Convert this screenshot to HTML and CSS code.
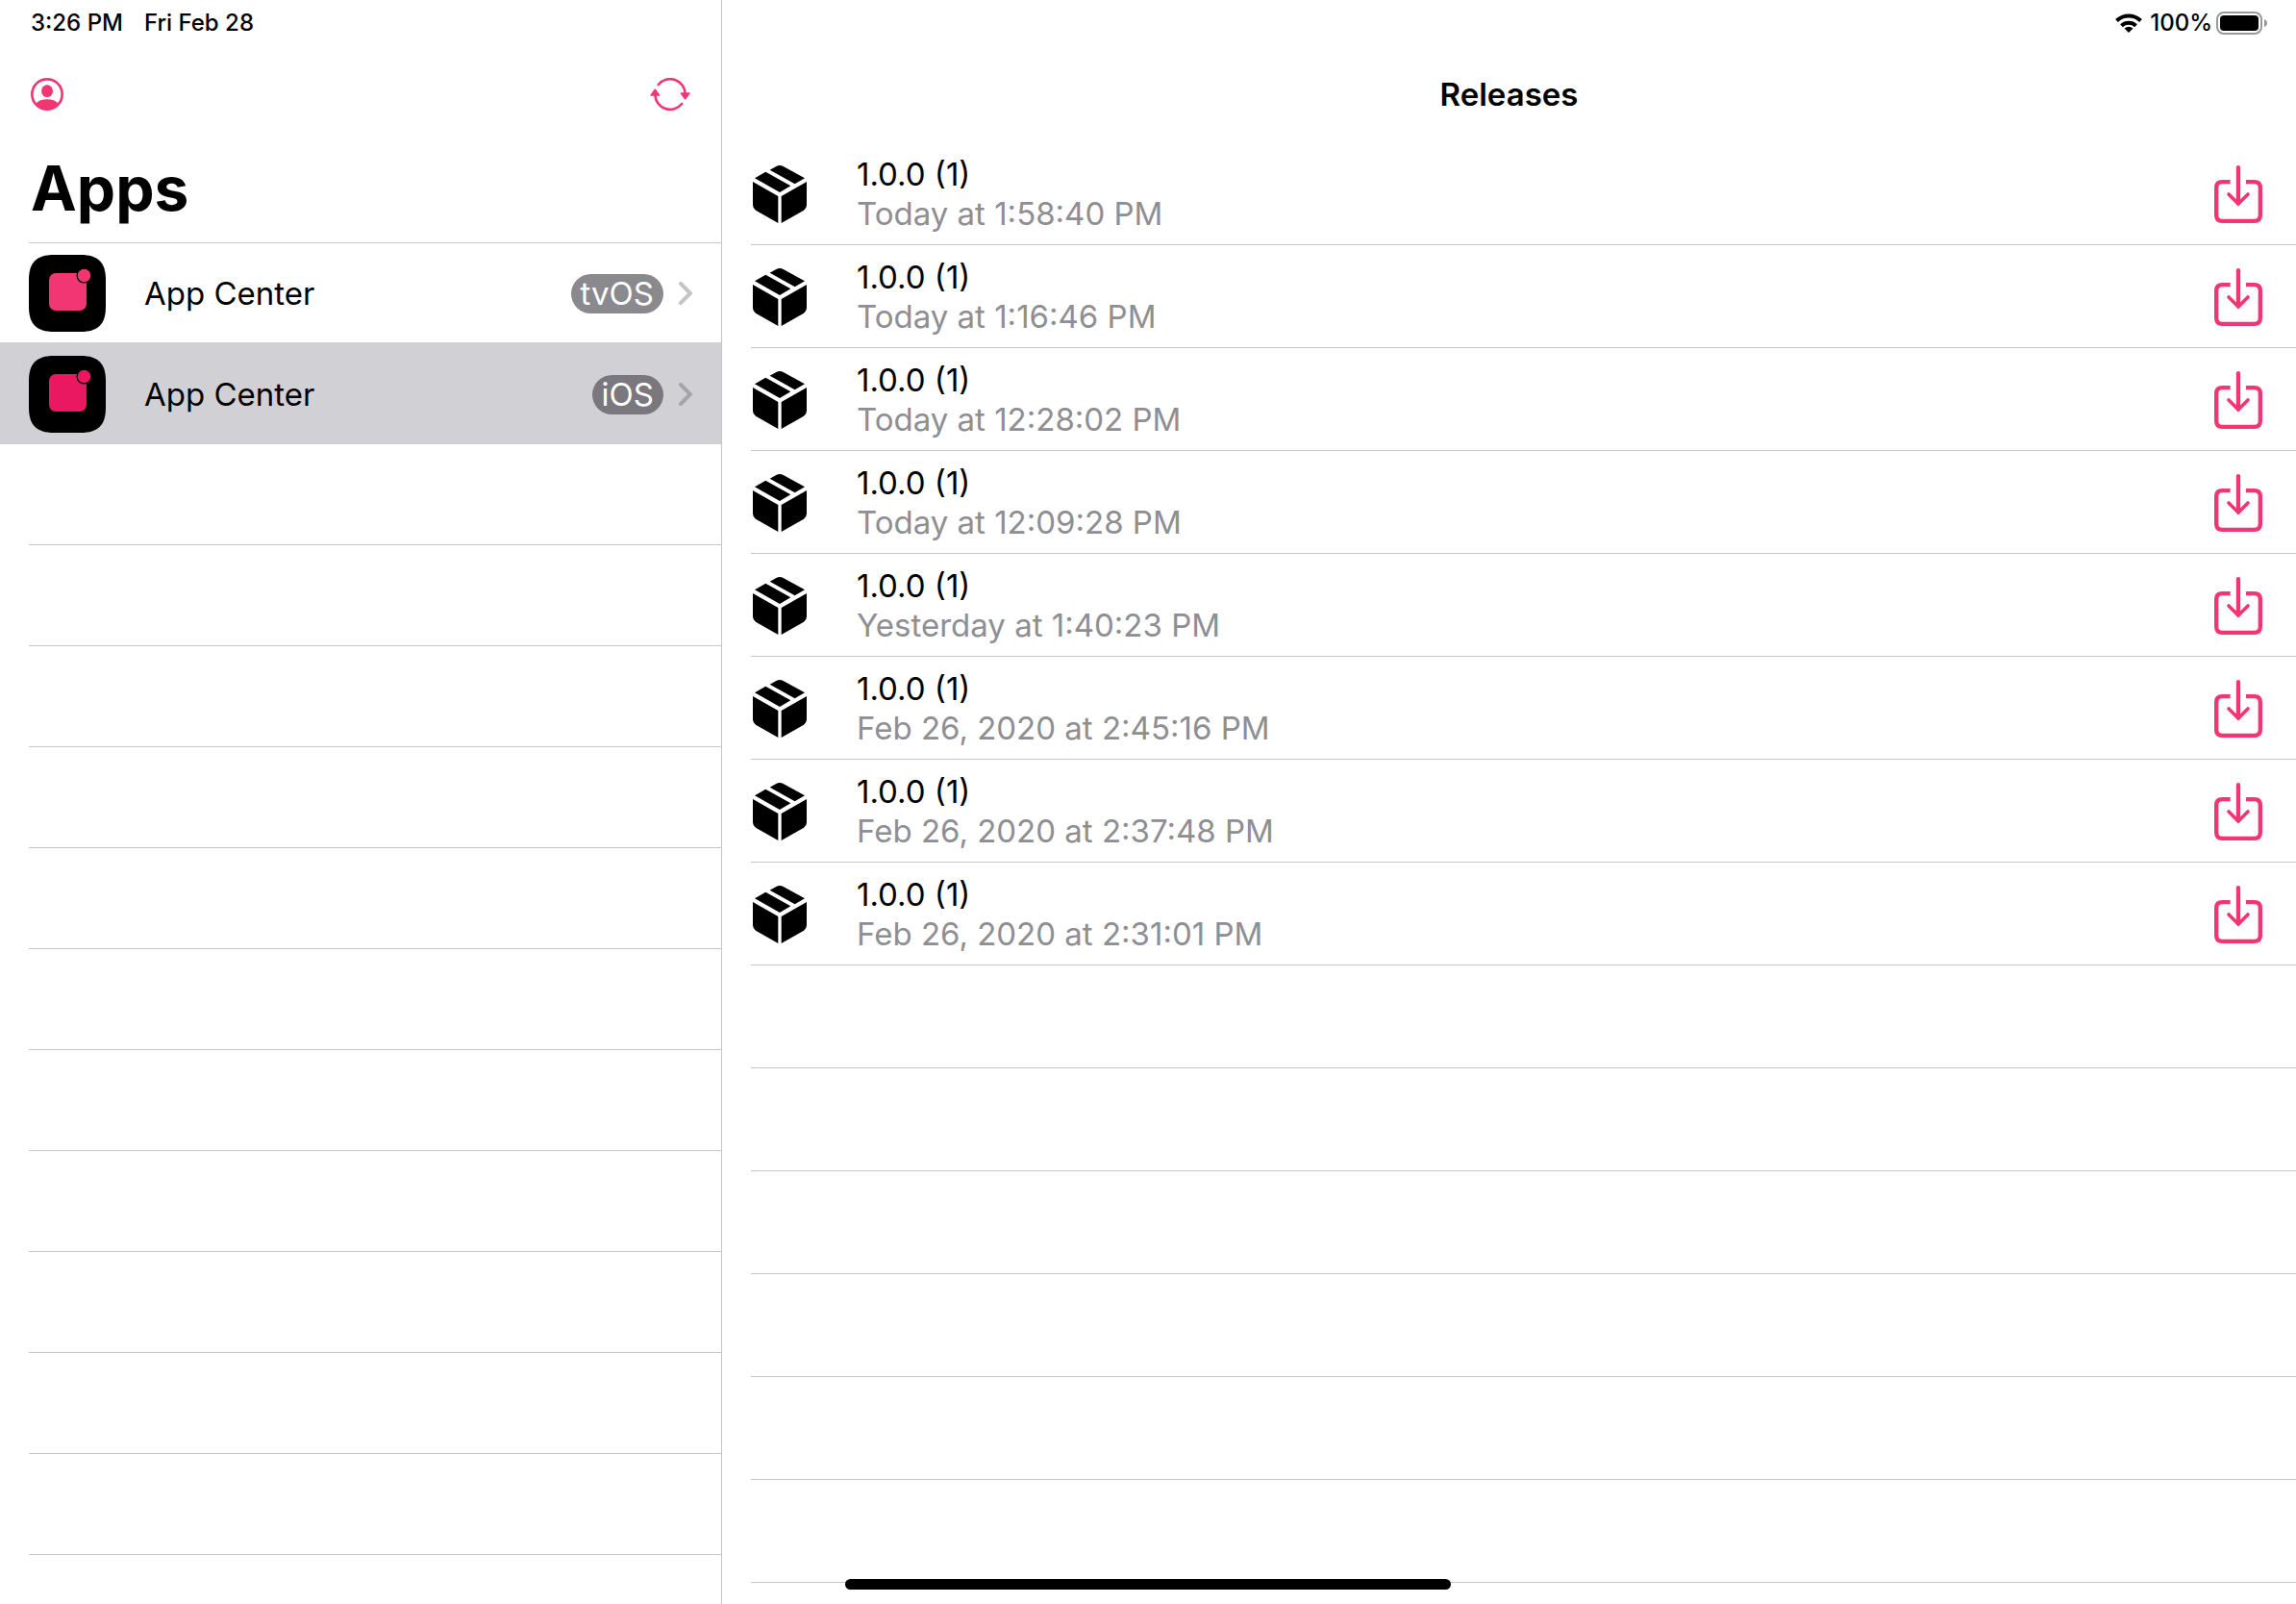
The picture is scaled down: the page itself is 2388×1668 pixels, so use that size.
FILE: index.html
```html
<!DOCTYPE html>
<html lang="en">
<head>
<meta charset="utf-8">
<title>Apps</title>
<link rel="stylesheet" href="styles.css">
</head>
<body>
<svg class="sprite" aria-hidden="true">
  <symbol id="app" viewBox="0 0 80 80">
    <path d="M0 26C0 8 8 0 26 0H54C72 0 80 8 80 26V54C80 72 72 80 54 80H26C8 80 0 72 0 54Z"/>
    <rect class="app-mark" x="21" y="19" width="39" height="39" rx="7"/>
    <circle cx="57.500" cy="21.500" r="8"/>
    <circle class="app-mark" cx="57.500" cy="21.500" r="6.800"/>
  </symbol>
  <symbol id="chevron" viewBox="0 0 14 24">
    <path d="M2 2L12 12L2 22" fill="none" stroke="currentColor" stroke-width="4" stroke-linecap="round" stroke-linejoin="miter"/>
  </symbol>
  <symbol id="box" viewBox="69 96 168 180">
    <path d="M69 147L148 192V276L78 236Q69 230 69 220ZM237 147L158 192V276L228 236Q237 230 237 220ZM75 136L109 116L187 160L153 180ZM122 110L142 99Q153 93 164 99L231 136L200 154Z"/>
  </symbol>
  <symbol id="download" viewBox="105 66 150 180">
    <g fill="none" stroke="currentColor" stroke-width="13">
      <path d="M155 117.500H130Q111.500 117.500 111.500 136V221Q111.500 239.500 130 239.500H230Q248.500 239.500 248.500 221V136Q248.500 117.500 230 117.500H204"/>
      <path d="M180 72.500V184" stroke-linecap="round"/>
      <path d="M150 156L180 186L210 156" stroke-width="11" stroke-linecap="round"/>
    </g>
  </symbol>
</svg>
<div class="split">
  <aside class="sidebar">
    <div class="status">
      <span>3:26 PM</span>
      <span>Fri Feb 28</span>
    </div>
    <div class="nav sidebar-nav">
      <button class="icon-button" type="button" aria-label="Account">
        <svg width="34" height="34" viewBox="96 243 102 102">
          <circle cx="147" cy="294" r="47" fill="none" stroke="currentColor" stroke-width="8"/>
          <ellipse cx="147" cy="284" rx="18" ry="19" fill="currentColor"/>
          <path d="M112 323Q124 310 147 310Q170 310 182 323Q168 342 147 342Q126 342 112 323Z" fill="currentColor"/>
        </svg>
      </button>
      <button class="icon-button" type="button" aria-label="Refresh">
        <svg width="42" height="34" viewBox="348 93 126 102">
          <g fill="none" stroke="currentColor" stroke-width="8" stroke-linecap="round">
            <path d="M374.500 114A47 47 0 0 1 458 142"/>
            <path d="M447.500 174A47 47 0 0 1 364 146"/>
          </g>
          <path d="M444 139H472Q474 140 473 142L460 160Q458 162 456 160L443 142Q442 140 444 139ZM378 149H350Q348 148 349 146L362 128Q364 125 366 128L379 146Q380 148 378 149Z" fill="currentColor"/>
        </svg>
      </button>
    </div>
    <h1 class="title">Apps</h1>
    <ul class="list apps">
      <li>
        <a class="app-row" href="#tvos">
          <svg class="app-icon" width="80" height="80"><use href="#app"/></svg>
          <span class="app-name">App Center</span>
          <span class="badge">tvOS</span>
          <svg class="chevron" width="14" height="24"><use href="#chevron"/></svg>
        </a>
      </li>
      <li>
        <a class="app-row selected" href="#ios" aria-current="page">
          <svg class="app-icon" width="80" height="80"><use href="#app"/></svg>
          <span class="app-name">App Center</span>
          <span class="badge">iOS</span>
          <svg class="chevron" width="14" height="24"><use href="#chevron"/></svg>
        </a>
      </li>
    </ul>
    <div class="blank-rows app-blanks"></div>
  </aside>
  <main class="detail">
    <div class="status status-right">
      <svg width="28" height="20" viewBox="0 0 28 20" aria-hidden="true">
        <g fill="none" stroke="#000" stroke-width="4">
          <path d="M1.500 7.500A18 18 0 0 1 26.500 7.500"/>
          <path d="M6.500 12.800A11 11 0 0 1 21.500 12.800"/>
        </g>
        <path d="M14 20L9.500 15.500Q14 12 18.500 15.500Z"/>
      </svg>
      <span class="percent">100%</span>
      <svg width="54" height="24" viewBox="0 0 54 24" aria-hidden="true">
        <rect x="1" y="1" width="46" height="22" rx="7" fill="none" stroke="#999" stroke-width="2"/>
        <rect x="4" y="4" width="40" height="16" rx="4"/>
        <path d="M50 8Q53 9 53 12Q53 15 50 16Z" fill="#999"/>
      </svg>
    </div>
    <div class="nav detail-nav"><h2 class="heading">Releases</h2></div>
    <ul class="list releases">
      <li class="release"><svg width="56" height="60"><use href="#box"/></svg><div class="release-text"><div>1.0.0 (1)</div><div class="date">Today at 1:58:40 PM</div></div><button class="icon-button" type="button" aria-label="Install"><svg width="50" height="60"><use href="#download"/></svg></button></li>
      <li class="release"><svg width="56" height="60"><use href="#box"/></svg><div class="release-text"><div>1.0.0 (1)</div><div class="date">Today at 1:16:46 PM</div></div><button class="icon-button" type="button" aria-label="Install"><svg width="50" height="60"><use href="#download"/></svg></button></li>
      <li class="release"><svg width="56" height="60"><use href="#box"/></svg><div class="release-text"><div>1.0.0 (1)</div><div class="date">Today at 12:28:02 PM</div></div><button class="icon-button" type="button" aria-label="Install"><svg width="50" height="60"><use href="#download"/></svg></button></li>
      <li class="release"><svg width="56" height="60"><use href="#box"/></svg><div class="release-text"><div>1.0.0 (1)</div><div class="date">Today at 12:09:28 PM</div></div><button class="icon-button" type="button" aria-label="Install"><svg width="50" height="60"><use href="#download"/></svg></button></li>
      <li class="release"><svg width="56" height="60"><use href="#box"/></svg><div class="release-text"><div>1.0.0 (1)</div><div class="date">Yesterday at 1:40:23 PM</div></div><button class="icon-button" type="button" aria-label="Install"><svg width="50" height="60"><use href="#download"/></svg></button></li>
      <li class="release"><svg width="56" height="60"><use href="#box"/></svg><div class="release-text"><div>1.0.0 (1)</div><div class="date">Feb 26, 2020 at 2:45:16 PM</div></div><button class="icon-button" type="button" aria-label="Install"><svg width="50" height="60"><use href="#download"/></svg></button></li>
      <li class="release"><svg width="56" height="60"><use href="#box"/></svg><div class="release-text"><div>1.0.0 (1)</div><div class="date">Feb 26, 2020 at 2:37:48 PM</div></div><button class="icon-button" type="button" aria-label="Install"><svg width="50" height="60"><use href="#download"/></svg></button></li>
      <li class="release"><svg width="56" height="60"><use href="#box"/></svg><div class="release-text"><div>1.0.0 (1)</div><div class="date">Feb 26, 2020 at 2:31:01 PM</div></div><button class="icon-button" type="button" aria-label="Install"><svg width="50" height="60"><use href="#download"/></svg></button></li>
    </ul>
    <div class="blank-rows release-blanks"></div>
  </main>
</div>
<div class="home-indicator"></div>
</body>
</html>
```

FILE: styles.css
```css
:root {
  --accent: #f23674;
  --line: #c6c6c8;
}

* {
  box-sizing: border-box;
}

body {
  margin: 0;
  background: #fff;
  color: #000;
  font-family: Inter, "Liberation Sans", sans-serif;
  font-size: 33px;
  line-height: 41px;
}

svg {
  display: block;
  flex: none;
}

.sprite {
  position: absolute;
  width: 0;
  height: 0;
}

.split {
  display: grid;
  grid-template-columns: 751px 1fr;
  min-height: 100vh;
}

.sidebar,
.detail {
  display: flex;
  flex-direction: column;
  min-width: 0;
}

.sidebar {
  border-right: 1px solid var(--line);
}

.status {
  display: flex;
  align-items: center;
  gap: 22px;
  height: 48px;
  padding: 0 32px;
  font-size: 24px;
  font-weight: 500;
  line-height: 40px;
}

.status-right {
  justify-content: flex-end;
  gap: 4px;
  padding-right: 29px;
}

.percent {
  padding-left: 4px;
}

.nav {
  display: flex;
  align-items: center;
  height: 100px;
}

.sidebar-nav {
  justify-content: space-between;
  padding: 0 32px;
}

.detail-nav {
  justify-content: center;
}

.icon-button {
  margin: 0;
  padding: 0;
  border: 0;
  background: none;
  color: var(--accent);
}

.heading {
  margin: 0;
  font-size: 33px;
  font-weight: 600;
  line-height: 40px;
}

.title {
  height: 104px;
  margin: 0;
  padding: 0 32px;
  font-size: 64px;
  font-weight: 700;
  line-height: 96px;
}

.list {
  margin: 0;
  padding: 0;
  list-style: none;
}

.apps {
  border-top: 1px solid transparent;
  background: linear-gradient(var(--line), var(--line)) 30px 0 / 100% 1px no-repeat border-box;
}

.app-row {
  display: flex;
  align-items: center;
  height: 104px;
  padding: 0 30px;
  color: inherit;
  text-decoration: none;
}

.app-row.selected {
  margin-top: -1px;
  height: 106px;
  padding-top: 2px;
  background: #d1d0d5;
}

.app-mark {
  fill: var(--mark, #f23674);
}

.selected .app-icon {
  --mark: #e91861;
}

.app-name {
  flex: 1;
  margin-left: 40px;
}

.badge {
  padding: 0 10px;
  border-radius: 21px;
  background: #8a898e;
  color: #fff;
}

.selected .badge {
  background: #7a787e;
}

.chevron {
  margin-left: 16px;
  color: #c4c4c6;
}

.selected .chevron {
  color: #a5a4a9;
}

.blank-rows {
  flex: 1;
  margin-left: 30px;
}

.app-blanks {
  background: repeating-linear-gradient(transparent 0 104px, var(--line) 104px 105px);
}

.release-blanks {
  background: repeating-linear-gradient(transparent 0 106px, var(--line) 106px 107px);
}

.releases {
  margin-left: 30px;
}

.release {
  display: flex;
  align-items: center;
  height: 107px;
  padding: 2px 35px 0 2px;
  border-bottom: 1px solid var(--line);
}

.release-text {
  flex: 1;
  margin-left: 52px;
}

.date {
  color: #8e8e93;
}

.home-indicator {
  position: fixed;
  right: 0;
  bottom: 15px;
  left: 0;
  width: 630px;
  height: 11px;
  margin: 0 auto;
  border-radius: 6px;
  background: #000;
}
```
